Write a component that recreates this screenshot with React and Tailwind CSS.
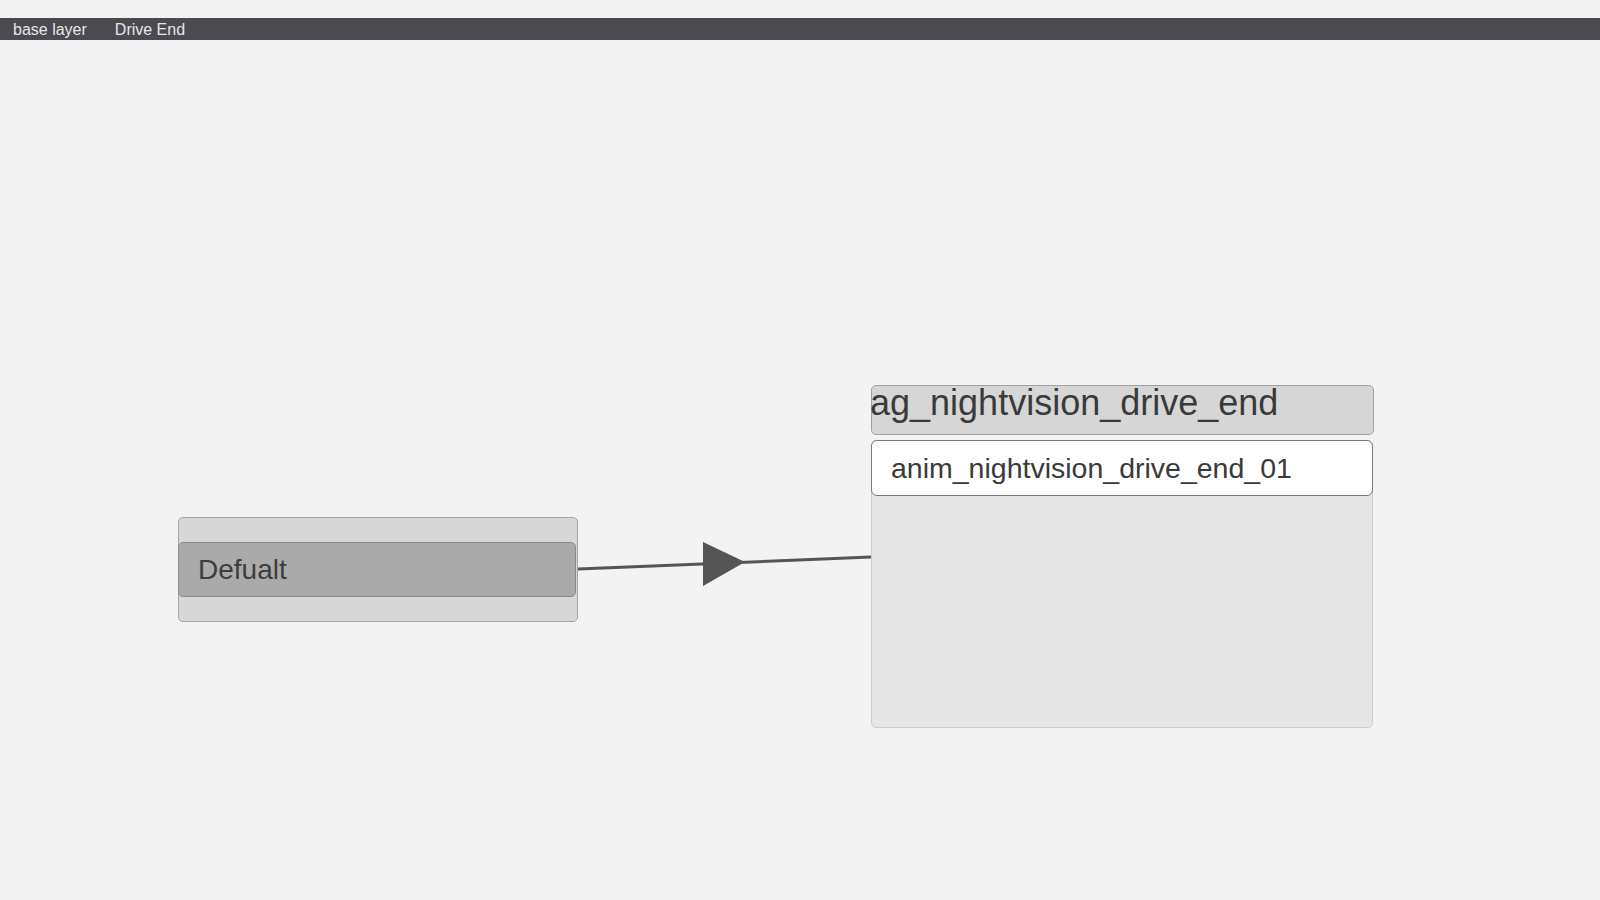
import React from "react";

const FONT = { fontFamily: '"Liberation Sans", Arial, sans-serif' };

function Breadcrumbs({ items }) {
  return (
    <div className="mt-[18px] h-[22px] bg-[#4b4a50] flex items-center pt-[2px]">
      {items.map((label) => (
        <span key={label} className="pl-[13px] pr-[15px] text-[16px] leading-none text-[#e6e6e6]">
          {label}
        </span>
      ))}
    </div>
  );
}

function Arrow() {
  // connection line from Defualt to the animation group
  return (
    <svg className="absolute left-0 top-0" width="1600" height="860" viewBox="0 0 1600 860">
      <line x1="578" y1="529" x2="871" y2="517" stroke="#555555" strokeWidth="3" />
      <polygon points="703,502 745,522 703,546" fill="#555555" />
    </svg>
  );
}

function StateNode() {
  return (
    <div className="absolute left-[178px] top-[477px] w-[400px] h-[105px] rounded-[5px] border border-[#a3a3a3] bg-[#d7d7d7] flex items-center">
      <div className="w-full h-[55px] -mx-px rounded-[5px] border border-[#8a8a8a] bg-[#aaaaaa] flex items-center px-[19px]">
        <span className="text-[28px] text-[#3d3d3d] leading-none">Defualt</span>
      </div>
    </div>
  );
}

function GroupNode({ title, anims }) {
  return (
    <div className="absolute left-[871px] top-[345px] w-[503px] flex flex-col gap-[5px]">
      <div className="h-[50px] rounded-[5px] border border-[#a0a0a0] bg-[#d6d6d6] overflow-visible">
        <div className="text-[36px] leading-none text-[#3a3a3a] -ml-[2px] -mt-px whitespace-nowrap">{title}</div>
      </div>
      <div className="h-[288px] w-[502px] rounded-[5px] border border-[#cccccc] bg-[#e6e6e6]">
        {anims.map((a) => (
          <div
            key={a}
            className="-m-px h-[56px] rounded-[6px] border border-[#7a7a7a] bg-white flex items-center px-[19px]"
          >
            <span className="text-[28.5px] leading-none text-[#3a3a3a]">{a}</span>
          </div>
        ))}
      </div>
    </div>
  );
}

export default function App() {
  return (
    <div className="w-[1600px] h-[900px] bg-[#f3f3f3] overflow-hidden" style={FONT}>
      <Breadcrumbs items={["base layer", "Drive End"]} />
      <div className="relative w-[1600px] h-[860px]">
        <Arrow />
        <StateNode />
        <GroupNode title="ag_nightvision_drive_end" anims={["anim_nightvision_drive_end_01"]} />
      </div>
    </div>
  );
}
